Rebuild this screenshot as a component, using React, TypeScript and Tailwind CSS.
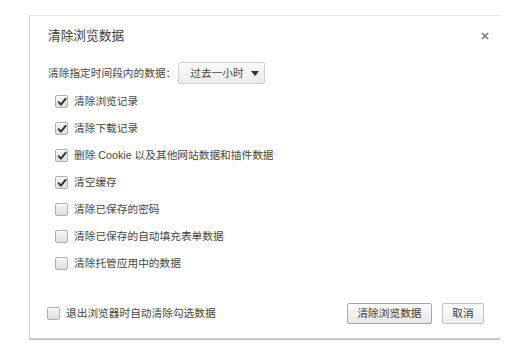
import React from "react";

function Box({ checked }: { checked: boolean }) {
  return (
    <span className="relative inline-flex h-[13px] w-[13px] shrink-0 items-center justify-center rounded-[2px] border border-[#b0b0b0] bg-gradient-to-b from-[#f6f6f6] to-[#dedede] shadow-[inset_0_1px_0_#fff]">
      {checked && (
        <svg width="10" height="10" viewBox="0 0 10 10" className="absolute">
          <path d="M1.6 5.2 L3.9 7.6 L8.6 1.8" fill="none" stroke="#303030" strokeWidth="1.9" strokeLinecap="round" strokeLinejoin="round" />
        </svg>
      )}
    </span>
  );
}

const rows: [string, boolean][] = [
  ["清除浏览记录", true],
  ["清除下载记录", true],
  ["删除 Cookie 以及其他网站数据和插件数据", true],
  ["清空缓存", true],
  ["清除已保存的密码", false],
  ["清除已保存的自动填充表单数据", false],
  ["清除托管应用中的数据", false],
];

export default function App() {
  return (
    <div className="h-[346px] w-[526px] bg-white font-['Liberation_Sans','Noto_Sans_CJK_SC',sans-serif] text-[#464646]">
      <div className="h-[15px]" />
      <div className="ml-[29px] flex h-[323px] w-[471px] flex-col border-l border-t border-l-[#d2d2d2] border-t-[#e4e4e4] shadow-[0_2px_0_#c8c8c8]">
        <div className="flex h-[40px] items-start justify-between pl-[18px] pr-[8px] pt-[11px]">
          <span className="text-[12.7px] leading-[18px] text-[#3c3c3c]">清除浏览数据</span>
          <svg width="8" height="8" viewBox="0 0 8 8" className="mt-[5px] mr-[3px]">
            <path d="M1 1 L7 7 M7 1 L1 7" stroke="#777" strokeWidth="1.6" />
          </svg>
        </div>
        <div className="mt-[6px] flex h-[22px] items-center pl-[18px] text-[10.7px]">
          <span>清除指定时间段内的数据：</span>
          <div className="ml-[2px] flex h-[22px] w-[87px] items-center justify-between rounded-[2px] border border-[#d2d2d2] bg-gradient-to-b from-[#fafafa] to-[#ececec] pl-[11px] pr-[5px]">
            <span>过去一小时</span>
            <svg width="8" height="5" viewBox="0 0 8 5">
              <path d="M0 0 L8 0 L4 5 Z" fill="#333" />
            </svg>
          </div>
        </div>
        <div className="mt-[4px] flex flex-col">
          {rows.map(([label, c]) => (
            <div key={label} className="flex h-[27px] items-center pl-[25px] text-[10.7px]">
              <Box checked={c} />
              <span className="ml-[6px]">{label}</span>
            </div>
          ))}
        </div>
        <div className="mt-[26px] flex h-[21px] items-center justify-between pl-[17px] pr-[16px] text-[10.7px]">
          <div className="flex items-center">
            <Box checked={false} />
            <span className="ml-[6px]">退出浏览器时自动清除勾选数据</span>
          </div>
          <div className="flex items-center gap-[10px]">
            <button className="h-[21px] w-[85px] rounded-[2px] border border-[#a8a8a8] bg-gradient-to-b from-[#fdfdfd] to-[#e6e6e6] text-[10.7px] text-[#3c3c3c]">清除浏览数据</button>
            <button className="h-[21px] w-[42px] rounded-[2px] border border-[#c4c4c4] bg-gradient-to-b from-[#fdfdfd] to-[#ececec] text-[10.7px] text-[#3c3c3c]">取消</button>
          </div>
        </div>
      </div>
    </div>
  );
}
